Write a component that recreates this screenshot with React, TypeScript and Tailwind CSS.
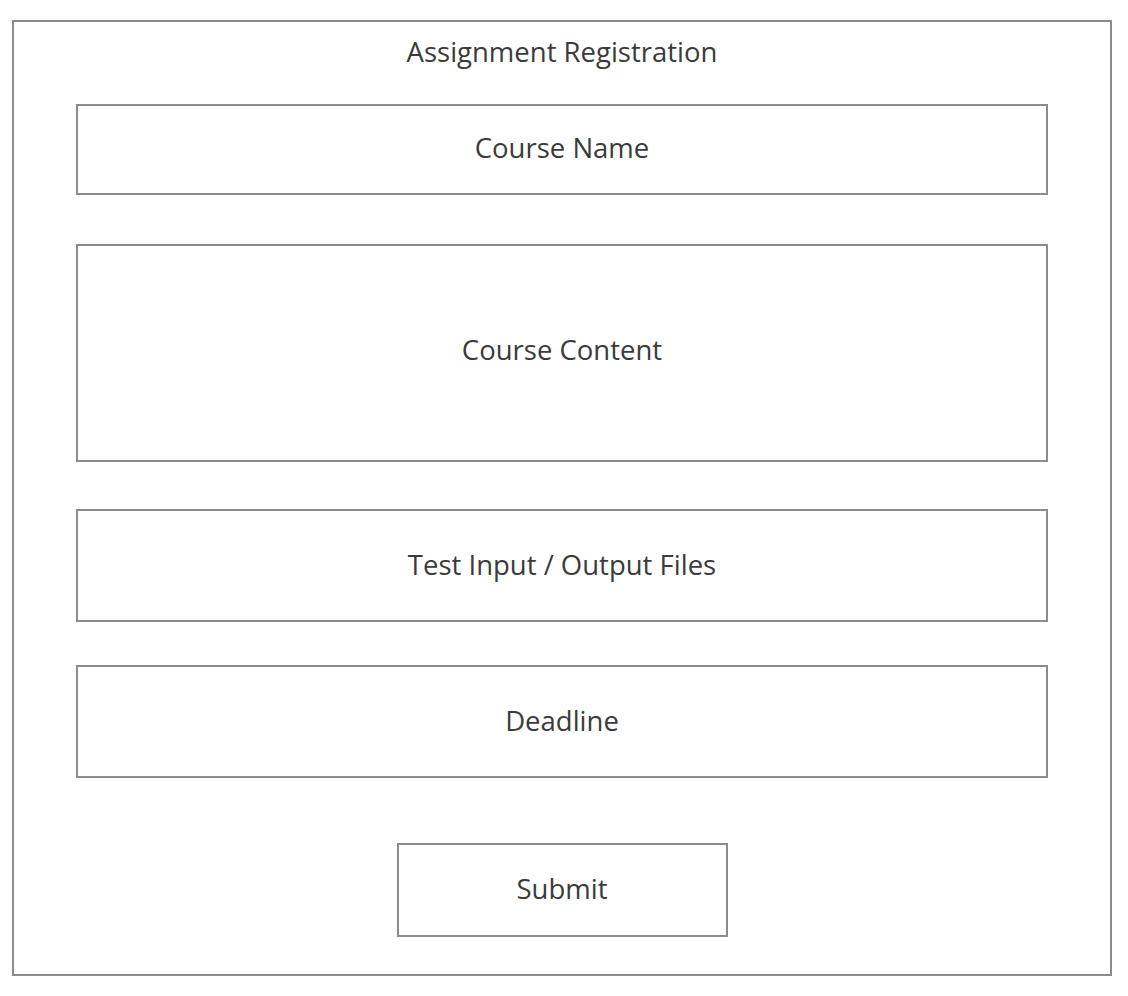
import React from 'react';

const fields = [
  { label: 'Course Name', h: 'h-[91px]', mt: 'mt-[34px]', pb: 'pb-[3px]' },
  { label: 'Course Content', h: 'h-[218px]', mt: 'mt-[49px]', pb: 'pb-[6px]' },
  { label: 'Test Input / Output Files', h: 'h-[113px]', mt: 'mt-[47px]', pb: 'pb-[2px]' },
  { label: 'Deadline', h: 'h-[113px]', mt: 'mt-[43px]', pb: 'pb-[2px]' },
];

const App: React.FC = () => {
  return (
    <div className="min-h-screen bg-white pt-[20px] pl-[12px] font-['Open_Sans',sans-serif] text-[#3b3b3b]">
      <div className="w-[1100px] h-[956px] border-2 border-[#8b8c8f] flex flex-col items-center pt-[12px]">
        {/* Title */}
        <h1 className="text-[27.5px] leading-[36px] font-normal">Assignment Registration</h1>

        {/* Form fields */}
        {fields.map((f) => (
          <div
            key={f.label}
            className={`${f.mt} ${f.h} ${f.pb} w-[972px] shrink-0 border-2 border-[#8b8c8f] flex items-center justify-center text-[27.5px] leading-[36px]`}
          >
            {f.label}
          </div>
        ))}

        <button className="mt-[65px] w-[331px] h-[94px] shrink-0 border-2 border-[#8b8c8f] flex items-center justify-center pb-[3px] text-[27.5px] leading-[36px]">
          Submit
        </button>
      </div>
    </div>
  );
};

export default App;
